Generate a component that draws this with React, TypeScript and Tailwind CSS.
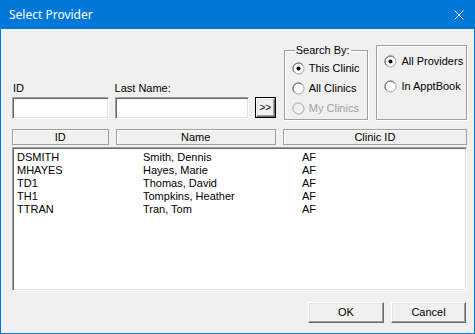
import React from "react";

interface Provider {
  id: string;
  name: string;
  clinic: string;
}

const providers: Provider[] = [
  { id: "DSMITH", name: "Smith, Dennis", clinic: "AF" },
  { id: "MHAYES", name: "Hayes, Marie", clinic: "AF" },
  { id: "TD1", name: "Thomas, David", clinic: "AF" },
  { id: "TH1", name: "Tompkins, Heather", clinic: "AF" },
  { id: "TTRAN", name: "Tran, Tom", clinic: "AF" },
];

function Radio({ checked, disabled, label }: { checked?: boolean; disabled?: boolean; label: string }) {
  return (
    <div className={`flex items-center gap-[3px] h-[14px] ${disabled ? "text-[#a0a0a0]" : "text-black"}`}>
      <svg width="13" height="13" viewBox="0 0 13 13" className="shrink-0">
        <circle cx="6.5" cy="6.5" r="5.5" fill={disabled ? "#f0f0f0" : "#fff"} stroke="#a0a0a0" />
        <path d="M2.6 10.4 A5.5 5.5 0 0 1 10.4 2.6" fill="none" stroke={disabled ? "#c8c8c8" : "#696969"} />
        {checked && <circle cx="6.5" cy="6.5" r="2" fill="#000" />}
      </svg>
      <span className="ml-[1px]">{label}</span>
    </div>
  );
}

const sunken =
  "bg-white border border-t-[#a0a0a0] border-l-[#a0a0a0] border-r-white border-b-white shadow-[inset_1px_1px_0_#696969,inset_-1px_-1px_0_#e3e3e3]";

const raised =
  "bg-[#f0f0f0] border border-t-white border-l-white border-r-[#696969] border-b-[#696969] shadow-[inset_-1px_-1px_0_#a0a0a0,inset_1px_1px_0_#e3e3e3]";

function HeaderCell({ label, width }: { label: string; width: string }) {
  return (
    <div
      className={`${width} h-[16px] flex items-center justify-center border border-[#a0a0a0] shadow-[inset_1px_1px_0_#ffffff] bg-[#f0f0f0]`}
    >
      {label}
    </div>
  );
}

export default function App() {
  return (
    <div
      className="w-[475px] h-[334px] flex flex-col bg-[#0078d7] px-[1px] pb-[1px] text-[11px] leading-[13px] text-black"
      style={{ fontFamily: '"Liberation Sans", Arial, sans-serif' }}
    >
      {/* Title bar */}
      <div className="h-[31px] flex items-center justify-between pl-[8px] pr-[10px] text-white">
        <span className="text-[12px]" style={{ fontFamily: '"Segoe UI", "Noto Sans", sans-serif' }}>
          Select Provider
        </span>
        <svg width="10" height="10" viewBox="0 0 10 10">
          <path d="M0.5 0.5 L9.5 9.5 M9.5 0.5 L0.5 9.5" stroke="#fff" strokeWidth="1" />
        </svg>
      </div>

      <div className="flex-1 bg-[#f0f0f0] flex flex-col pl-[11px] pr-[7px] pt-[16px] pb-[10px]">
        {/* Search row */}
        <div className="flex items-end">
          <div className="flex flex-col w-[97px]">
            <span className="pl-[1px] mb-[2px]">ID</span>
            <div className={`${sunken} h-[22px]`} />
          </div>
          <div className="flex flex-col w-[135px] ml-[6px]">
            <span className="mb-[2px]">Last Name:</span>
            <div className={`${sunken} h-[22px]`} />
          </div>
          <div className="ml-[6px] mb-[1px] w-[21px] h-[21px] border border-black">
            <div className={`${raised} w-full h-full flex items-center justify-center text-[10px]`}>&gt;&gt;</div>
          </div>

          <fieldset className="ml-[8px] w-[85px] h-[75px] border border-[#a0a0a0] shadow-[inset_1px_1px_0_#fff,1px_1px_0_#fff] pl-[7px] pt-[5px] flex flex-col gap-[6px] -mb-[1px]">
            <legend className="ml-[3px] px-[1px] leading-[11px]">Search By:</legend>
            <Radio checked label="This Clinic" />
            <Radio label="All Clinics" />
            <Radio disabled label="My Clinics" />
          </fieldset>

          <div className="ml-[8px] w-[91px] h-[75px] border border-[#a0a0a0] shadow-[inset_1px_1px_0_#fff,1px_1px_0_#fff] pl-[7px] pt-[8px] flex flex-col gap-[11px] -mb-[1px]">
            <Radio checked label="All Providers" />
            <Radio label="In ApptBook" />
          </div>
        </div>

        {/* Column headers */}
        <div className="flex gap-[7px] mt-[10px]">
          <HeaderCell label="ID" width="w-[97px]" />
          <HeaderCell label="Name" width="w-[161px]" />
          <HeaderCell label="Clinic ID" width="w-[185px]" />
        </div>

        {/* List */}
        <div className={`${sunken} mt-[2px] h-[144px] pt-[3px] pl-[3px]`}>
          {providers.map((p) => (
            <div key={p.id} className="flex h-[13px]">
              <span className="w-[127px] pl-[1px]">{p.id}</span>
              <span className="w-[159px]">{p.name}</span>
              <span>{p.clinic}</span>
            </div>
          ))}
        </div>

        {/* Buttons */}
        <div className="flex justify-end gap-[7px] mt-[11px] pr-[1px]">
          <button className={`${raised} w-[76px] h-[21px] text-[11px]`}>OK</button>
          <button className={`${raised} w-[75px] h-[21px] text-[11px]`}>Cancel</button>
        </div>
      </div>
    </div>
  );
}
